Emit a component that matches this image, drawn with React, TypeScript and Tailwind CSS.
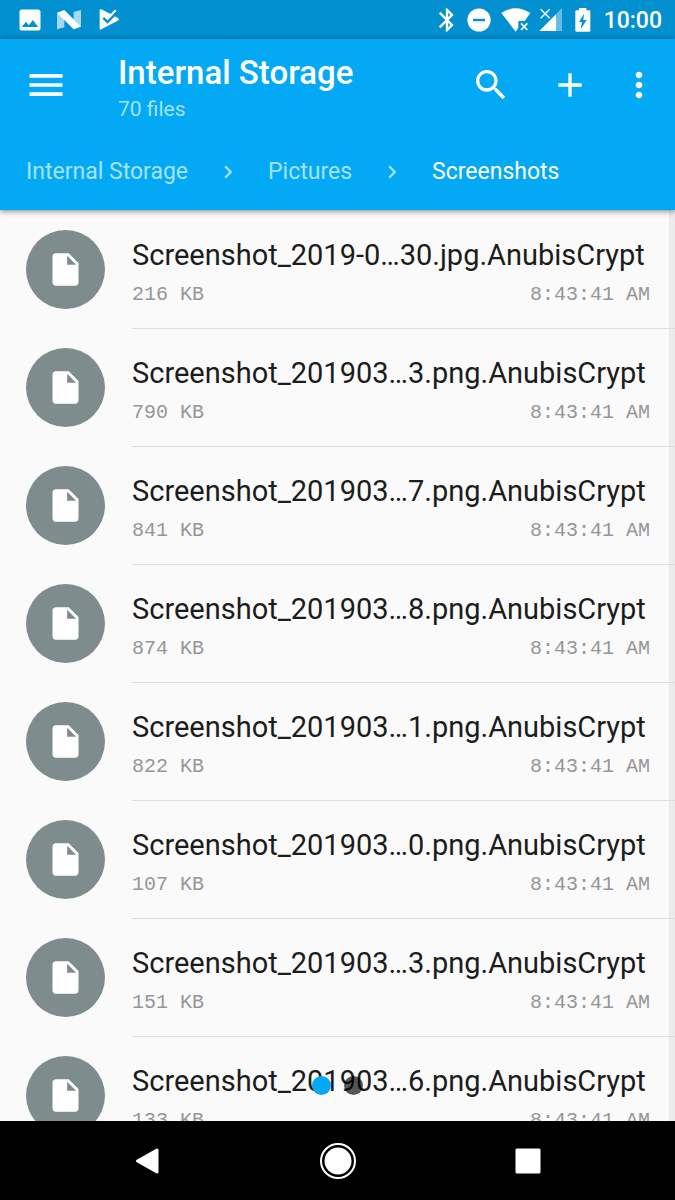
import React from "react";
import {
  MdAdd,
  MdBluetooth,
  MdChevronRight,
  MdImage,
  MdMenu,
  MdMoreVert,
  MdSearch,
} from "react-icons/md";

type FileEntry = { name: string; size: string; time: string };

const files: FileEntry[] = [
  { name: "Screenshot_2019-0…30.jpg.AnubisCrypt", size: "216 KB", time: "8:43:41 AM" },
  { name: "Screenshot_201903…3.png.AnubisCrypt", size: "790 KB", time: "8:43:41 AM" },
  { name: "Screenshot_201903…7.png.AnubisCrypt", size: "841 KB", time: "8:43:41 AM" },
  { name: "Screenshot_201903…8.png.AnubisCrypt", size: "874 KB", time: "8:43:41 AM" },
  { name: "Screenshot_201903…1.png.AnubisCrypt", size: "822 KB", time: "8:43:41 AM" },
  { name: "Screenshot_201903…0.png.AnubisCrypt", size: "107 KB", time: "8:43:41 AM" },
  { name: "Screenshot_201903…3.png.AnubisCrypt", size: "151 KB", time: "8:43:41 AM" },
  { name: "Screenshot_201903…6.png.AnubisCrypt", size: "133 KB", time: "8:43:41 AM" },
];

function StatusBar() {
  return (
    <div className="flex h-[39px] shrink-0 items-center justify-between bg-[#0290d1] pr-[13px] pl-4 text-white">
      <div className="flex items-center">
        <MdImage size={28} aria-hidden="true" />
        <svg viewBox="0 0 72 60" className="ml-[13px] h-5 w-6" aria-hidden="true">
          <path d="M0 8 22 20V52L0 58Z" fill="#fff" opacity=".65" />
          <path d="M50 6 72 0V50L50 34Z" fill="#fff" opacity=".65" />
          <path d="M0 8 22 0 72 50 50 58Z" fill="#fff" />
        </svg>
        <svg viewBox="0 0 62 64" className="ml-[18px] h-[21px] w-[21px]" aria-hidden="true">
          <path d="M1 4Q1-1 6 1L56 27Q63 31 56 36L6 62Q1 65 1 60Z" fill="#fff" />
          <path d="M28 27 50 4" fill="none" stroke="#fff" strokeWidth="7" />
          <path d="M12 27 25 40 52 12" fill="none" stroke="#0290d1" strokeWidth="7" />
        </svg>
      </div>
      <div className="flex items-center">
        <MdBluetooth size={28} aria-hidden="true" />
        <svg viewBox="0 0 24 24" className="ml-[6px] size-6" aria-hidden="true">
          <circle cx="12" cy="12" r="11.6" fill="#fff" />
          <path d="M6 12h12" stroke="#0290d1" strokeWidth="2.4" />
        </svg>
        <svg viewBox="228 22 90 72" className="ml-[10px] h-6 w-[30px]" aria-hidden="true">
          <path d="M229 37Q272 9 316 37L299 61H280V81L272 93Z" fill="#fff" />
          <path d="M288 68 307 88M307 68 288 88" stroke="#fff" strokeWidth="5" />
        </svg>
        <svg viewBox="344 24 72 72" className="ml-[8px] size-6" aria-hidden="true">
          <path d="M395 43 413 24V93H395Z" fill="#fff" opacity=".4" />
          <path d="M345 93 395 43V93Z" fill="#fff" />
          <path d="M349 28 376 55M376 28 349 55" stroke="#fff" strokeWidth="4" />
        </svg>
        <svg viewBox="453 22 48 72" className="ml-[12px] h-6 w-4" aria-hidden="true">
          <path
            fill="#fff"
            d="M465 22H487V29H496Q499 29 499 32V90Q499 93 496 93H457Q454 93 454 90V32Q454 29 457 29H465Z"
          />
          <path d="M480 39 465 64H474L470 86 488 58H478Z" fill="#0290d1" />
        </svg>
        <span className="ml-[13px] pt-[2px] text-[23px] leading-7 font-medium">10:00</span>
      </div>
    </div>
  );
}

function AppBar() {
  return (
    <header className="relative z-10 flex h-[171px] shrink-0 flex-col bg-[#04a9f5] text-white shadow-[0_1px_6px_rgba(0,0,0,0.5)]">
      <div className="flex h-[92px] items-center pr-4 pl-6">
        <button type="button" aria-label="Open menu" className="flex size-11 items-center justify-center">
          <MdMenu size={44} />
        </button>
        <div className="ml-[50px] flex-1 pt-2">
          <h1 className="text-[33px] leading-10 font-medium">Internal Storage</h1>
          <p className="text-[21px] leading-8 text-[#a5e3fc]">70 files</p>
        </div>
        <div className="flex items-center gap-[39px]">
          <button type="button" aria-label="Search">
            <MdSearch size={40} />
          </button>
          <button type="button" aria-label="Add">
            <MdAdd size={40} />
          </button>
          <button type="button" aria-label="More options" className="-ml-[10px]">
            <MdMoreVert size={40} />
          </button>
        </div>
      </div>
      <nav aria-label="Breadcrumb" className="flex flex-1 items-center px-[26px] pt-[3px]">
        <ol className="flex items-center text-[23px] leading-8 text-[#a5e3fc]">
          <li>
            <a href="#storage">Internal Storage</a>
          </li>
          <li className="px-[27px]" aria-hidden="true">
            <MdChevronRight size={26} />
          </li>
          <li>
            <a href="#pictures">Pictures</a>
          </li>
          <li className="px-[27px]" aria-hidden="true">
            <MdChevronRight size={26} />
          </li>
          <li>
            <a href="#screenshots" aria-current="page" className="text-white">
              Screenshots
            </a>
          </li>
        </ol>
      </nav>
    </header>
  );
}

function FileRow({ file }: { file: FileEntry }) {
  return (
    <li className="flex h-[118px] pl-[26px]">
      <span className="mt-[19px] flex size-[79px] shrink-0 items-center justify-center rounded-full bg-[#7f8c8d]">
        <svg viewBox="0 0 24 24" className="size-[39px]" aria-hidden="true">
          <path
            fill="#fff"
            d="M6 2c-1.1 0-1.99.9-1.99 2L4 20c0 1.1.89 2 1.99 2H18c1.1 0 2-.9 2-2V8l-6-6H6zm7 7V3.5L18.5 9H13z"
          />
        </svg>
      </span>
      <div className="ml-[27px] min-w-0 flex-1 border-b border-[#dedede] pt-6 pr-[25px]">
        <p className="text-[29px] leading-10 whitespace-nowrap text-[#1c1c1c]">{file.name}</p>
        <p className="mt-1 flex justify-between font-['Liberation_Mono',monospace] text-[20px] leading-8 text-[#969696]">
          <span>{file.size}</span>
          <time>{file.time}</time>
        </p>
      </div>
    </li>
  );
}

function NavigationBar() {
  return (
    <nav
      aria-label="System"
      className="flex h-[79px] shrink-0 items-center justify-center gap-[150px] bg-black"
    >
      <button type="button" aria-label="Back">
        <svg viewBox="0 0 40 40" className="size-10">
          <path
            d="M9.5 20 29 9V31Z"
            fill="#fff"
            stroke="#fff"
            strokeWidth="3"
            strokeLinejoin="round"
          />
        </svg>
      </button>
      <button type="button" aria-label="Home">
        <svg viewBox="0 0 40 40" className="size-10">
          <circle cx="20" cy="20" r="17" fill="none" stroke="#fff" strokeWidth="2" />
          <circle cx="20" cy="20" r="13.5" fill="#fff" />
        </svg>
      </button>
      <button type="button" aria-label="Recent apps">
        <svg viewBox="0 0 40 40" className="size-10">
          <rect x="7.5" y="7.5" width="25" height="25" rx="1.5" fill="#fff" />
        </svg>
      </button>
    </nav>
  );
}

export default function App() {
  return (
    <div className="flex h-screen flex-col overflow-hidden bg-[#fafafa] font-[Roboto,sans-serif]">
      <StatusBar />
      <AppBar />
      <main className="relative min-h-0 flex-1 overflow-hidden">
        <div className="absolute inset-y-0 right-0 w-[6px] bg-[#ebebeb]" />
        <ul className="relative pt-px">
          {files.map((file) => (
            <FileRow key={file.name + file.size} file={file} />
          ))}
        </ul>
        <div className="absolute inset-x-0 bottom-[26px] flex justify-center gap-[13px]">
          <span className="size-[19px] rounded-full bg-[#04a9f5]" />
          <span className="size-[19px] rounded-full bg-black/65" />
        </div>
      </main>
      <NavigationBar />
    </div>
  );
}
